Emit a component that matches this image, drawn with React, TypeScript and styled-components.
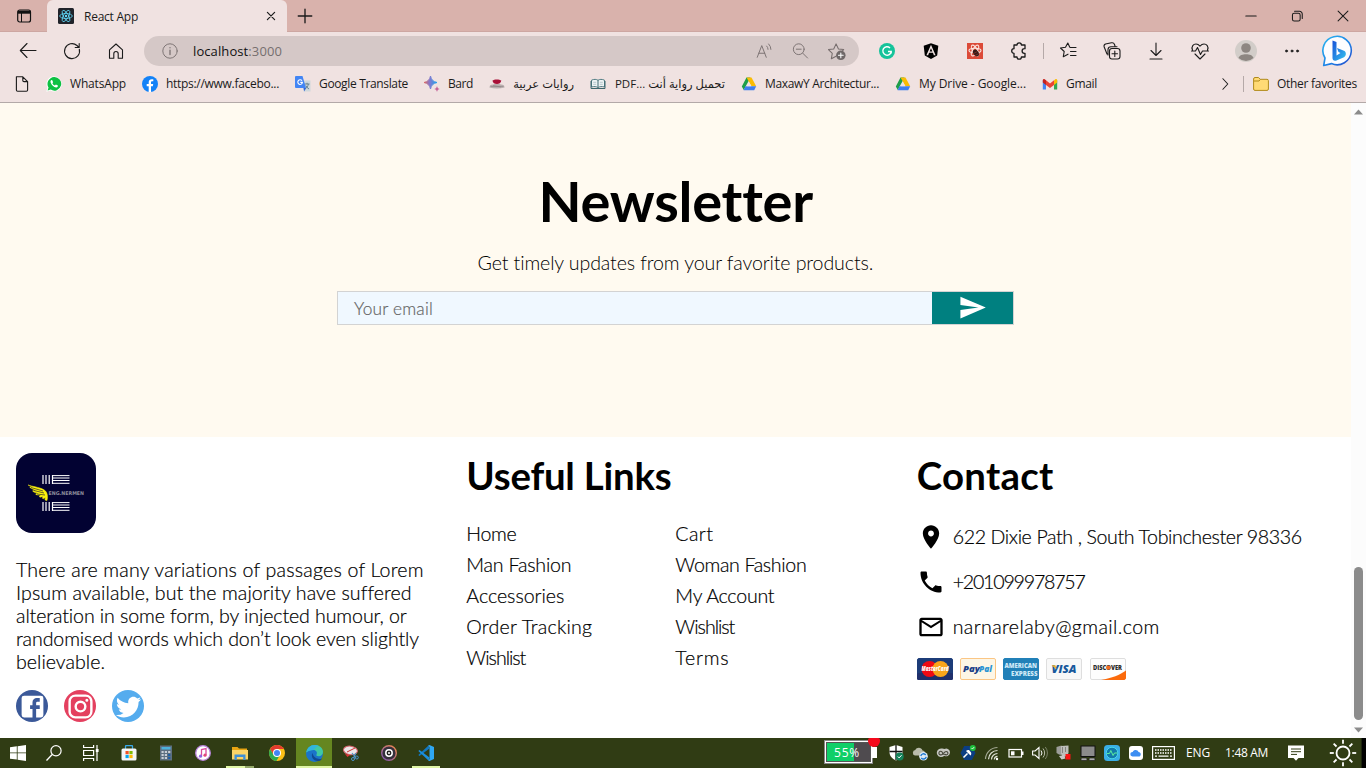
import React, { useLayoutEffect, useRef, useState } from "react";
import styled, { createGlobalStyle } from "styled-components";
import { FaAngular } from "react-icons/fa";

const GlobalStyle = createGlobalStyle`
  * { box-sizing: border-box; }
  body { margin: 0; overflow: hidden; font-family: Lato, "Liberation Sans", sans-serif; }
  svg { display: block; flex: none; }
`;

const uiFont = `"Open Sans", "Noto Sans", sans-serif`;

/* ---------- text set to a given measure ---------- */

const Measure = styled.span<{ $width: number }>`
  display: block;
  flex: none;
  width: ${(p) => p.$width}px;
  white-space: nowrap;
`;

function Fit({ width, children }: { width: number; children: React.ReactNode }) {
  const ref = useRef<HTMLSpanElement>(null);
  const [spacing, setSpacing] = useState(0);
  useLayoutEffect(() => {
    const el = ref.current;
    if (!el) return;
    const length = (el.textContent || "").length;
    setSpacing((width - el.getBoundingClientRect().width) / length);
  }, [width]);
  return (
    <Measure $width={width}>
      <span ref={ref} style={{ letterSpacing: spacing }}>
        {children}
      </span>
    </Measure>
  );
}

/* ---------- browser frame ---------- */

const Screen = styled.div`
  width: 1366px;
  height: 768px;
  display: flex;
  flex-direction: column;
  overflow: hidden;
  background: #fff;
`;

const TabStrip = styled.div`
  height: 32px;
  flex: none;
  display: flex;
  align-items: center;
  background: #d9b2ac;
  box-shadow: inset 0 -1px 0 #cda7a2;
  font: 12px ${uiFont};
`;

const Cell = styled.div<{ $w: number }>`
  width: ${(p) => p.$w}px;
  height: 100%;
  flex: none;
  display: flex;
  align-items: center;
  justify-content: center;
`;

const Tab = styled.div`
  width: 240px;
  height: 32px;
  display: flex;
  align-items: center;
  padding: 0 10px 0 11px;
  background: #f0e2e1;
  border-radius: 6px 6px 0 0;
  color: #1b1b1b;
`;

const TabTitle = styled.div`
  margin-left: 10px;
  flex: 1;
`;

const Spacer = styled.div`
  flex: 1;
`;

const Toolbar = styled.div`
  height: 38px;
  flex: none;
  display: flex;
  align-items: center;
  background: #f0e2e1;
  padding-left: 6px;
  color: #1b1b1b;
`;

const AddressBar = styled.div`
  width: 715px;
  height: 30px;
  margin: 0 6px;
  border-radius: 15px;
  background: #d5c8c7;
  display: flex;
  align-items: center;
  padding: 0 4px 0 17px;
  font: 13px ${uiFont};
  color: #111;
`;

const Url = styled.div`
  margin-left: 14px;
  flex: 1;
`;

const Port = styled.span`
  color: #766f6f;
`;

const Separator = styled.div<{ $left: number; $right: number }>`
  width: 1px;
  height: 16px;
  flex: none;
  background: #b5a9a8;
  margin: 0 ${(p) => p.$right}px 0 ${(p) => p.$left}px;
`;

const FavoritesBar = styled.div`
  height: 33px;
  flex: none;
  display: flex;
  align-items: center;
  gap: 16px;
  padding: 0 9px 5px 14px;
  background: #f0e2e1;
  border-bottom: 1px solid #b3a9a8;
  font: 12px/16px ${uiFont};
  color: #1b1b1b;
`;

const Favorite = styled.div`
  display: flex;
  align-items: center;
  gap: 8px;
  flex: none;
`;

const ArabicLabel = styled.span<{ $w: number; $size: number }>`
  width: ${(p) => p.$w}px;
  white-space: nowrap;
  direction: rtl;
  font: ${(p) => p.$size}px/16px "Open Sans", "DejaVu Sans", sans-serif;
`;

/* ---------- page ---------- */

const Viewport = styled.div`
  height: 635px;
  flex: none;
  display: flex;
`;

const Page = styled.main`
  width: 1351px;
  display: flex;
  flex-direction: column;
  color: #000;
`;

const Newsletter = styled.section`
  height: 334px;
  background: #fffaf0;
  display: flex;
  flex-direction: column;
  align-items: center;
  padding-top: 64px;
`;

const Title = styled.h1`
  margin: 0;
  padding-right: 2px;
  font-size: 56px;
  line-height: 68px;
  font-weight: 700;
`;

const Subtitle = styled.p`
  margin: 11px 0 0;
  font-size: 19.6px;
  line-height: 34px;
  font-weight: 300;
`;

const EmailForm = styled.div`
  margin-top: 11px;
  width: 677px;
  height: 34px;
  border: 1px solid lightgray;
  display: flex;
`;

const EmailField = styled.div`
  flex: 1;
  display: flex;
  align-items: center;
  padding-left: 16px;
  background: aliceblue;
  color: #666;
  font-size: 17.3px;
  font-weight: 300;
  -webkit-text-stroke: 0.2px currentColor;
`;

const SendButton = styled.button`
  width: 81px;
  border: 0;
  padding: 0 0 2px;
  background: teal;
  color: #fff;
  display: flex;
  align-items: center;
  justify-content: center;
`;

const Footer = styled.footer`
  flex: 1;
  display: grid;
  grid-template-columns: repeat(3, 1fr);
  background: #fff;
  font-size: 19.6px;
  font-weight: 300;
  -webkit-text-stroke: 0.2px currentColor;
`;

const Column = styled.div`
  padding: 16px;
`;

const About = styled.div`
  margin: 25px 0 0;
  line-height: 23px;
`;

const Socials = styled.div`
  display: flex;
  gap: 16px;
  margin-top: 17px;
`;

const Social = styled.div<{ $color: string }>`
  width: 32px;
  height: 32px;
  border-radius: 50%;
  background: ${(p) => p.$color};
  color: #fff;
  display: flex;
  align-items: center;
  justify-content: center;
`;

const Heading = styled.h2`
  margin: 0;
  font-size: 38.4px;
  line-height: 44px;
  font-weight: 700;
  -webkit-text-stroke: 0;
`;

const Links = styled.div`
  margin-top: 21px;
  display: grid;
  grid-template-columns: 209px 209px;
  grid-auto-rows: 31px;
  line-height: 31px;
`;

const ContactList = styled.div`
  margin-top: 17px;
`;

const ContactRow = styled.div`
  height: 45px;
  display: flex;
  align-items: center;
  gap: 8px;
`;

const Cards = styled.div`
  margin-top: 9px;
  display: flex;
  gap: 7.25px;
`;

const Scrollbar = styled.div`
  width: 15px;
  background: #fcfcfc;
  display: flex;
  flex-direction: column;
  align-items: center;
  padding: 6px 0 5px;
`;

const Thumb = styled.div`
  width: 9px;
  height: 153px;
  margin: auto 0 7px;
  border-radius: 5px;
  background: #8b8b8b;
`;

/* ---------- taskbar ---------- */

const Taskbar = styled.div`
  height: 30px;
  flex: none;
  display: flex;
  background: #303c14;
  font: 12px ${uiFont};
  color: #fff;
`;

const Task = styled.div<{ $w: number; $active?: boolean }>`
  position: relative;
  width: ${(p) => p.$w}px;
  display: flex;
  align-items: center;
  justify-content: center;
  background: ${(p) => (p.$active ? "#658620" : "none")};
`;

const Running = styled.div<{ $w: number; $split?: boolean }>`
  position: absolute;
  bottom: 0;
  width: ${(p) => p.$w}px;
  height: 2px;
  background: ${(p) => (p.$split ? "linear-gradient(90deg,#e0f6a6 19px,#93a869 19px)" : "#e0f6a6")};
`;

const BatteryMeter = styled.div`
  position: relative;
  width: 49px;
  height: 24px;
  margin: 2px 11px 0 0;
  border: 2px solid #fff;
  outline: 1px solid #888;
  outline-offset: -1px;
  padding: 1px;
  display: flex;
  background: #555;
`;

const BatteryLevel = styled.div`
  flex: 1;
  display: flex;
  align-items: center;
  padding-left: 7px;
  font-size: 12px;
  background: linear-gradient(90deg, #10cf68 27px, #4f4b4f 27px);
`;

const BatteryTip = styled.div`
  position: absolute;
  right: -6px;
  top: 5px;
  width: 5px;
  height: 11px;
  background: #fff;
`;

const AlertDot = styled.div`
  position: absolute;
  right: -9px;
  top: -4px;
  width: 12px;
  height: 9px;
  border-radius: 2px 2px 6px 6px;
  background: #f40a1c;
`;

const TrayText = styled.div<{ $left: number }>`
  margin-left: ${(p) => p.$left}px;
  line-height: 29px;
`;

const ScreenEdge = styled.div`
  width: 5px;
  border-left: 1px solid #1c230c;
  background: #000;
`;

/* ---------- drawings ---------- */

type LineProps = { s?: number; w?: number; c?: string; children: React.ReactNode };
const Line = ({ s = 20, w = 1.1, c = "#1b1b1b", children }: LineProps) => (
  <svg width={s} height={s} viewBox="0 0 20 20" fill="none" stroke={c} strokeWidth={w} strokeLinecap="round" strokeLinejoin="round">
    {children}
  </svg>
);

const Glyph = ({ d, s = 28 }: { d: string; s?: number }) => (
  <svg width={s} height={s} viewBox="0 0 24 24" fill="currentColor">
    <path d={d} />
  </svg>
);

const paths = {
  send: "M2.01 21L23 12 2.01 3 2 10l15 2-15 2z",
  room: "M12 2C8.13 2 5 5.13 5 9c0 5.25 7 13 7 13s7-7.75 7-13c0-3.87-3.13-7-7-7zm0 9.5c-1.38 0-2.5-1.12-2.5-2.5s1.12-2.5 2.5-2.5 2.5 1.12 2.5 2.5-1.12 2.5-2.5 2.5z",
  phone: "M6.62 10.79c1.44 2.83 3.76 5.14 6.59 6.59l2.2-2.2c.27-.27.67-.36 1.02-.24 1.12.37 2.33.57 3.57.57.55 0 1 .45 1 1V20c0 .55-.45 1-1 1-9.39 0-17-7.61-17-17 0-.55.45-1 1-1h3.5c.55 0 1 .45 1 1 0 1.25.2 2.45.57 3.57.11.35.03.74-.25 1.02l-2.2 2.2z",
  mail: "M20 4H4c-1.1 0-1.99.9-1.99 2L2 18c0 1.1.9 2 2 2h16c1.1 0 2-.9 2-2V6c0-1.1-.9-2-2-2zm0 14H4V8l8 5 8-5v10zm-8-7L4 6h16l-8 5z",
  facebook: "M5 3h14a2 2 0 0 1 2 2v14a2 2 0 0 1-2 2H5a2 2 0 0 1-2-2V5a2 2 0 0 1 2-2m13 2h-2.5A3.5 3.5 0 0 0 12 8.5V11h-2v3h2v7h3v-7h3v-3h-3V9a1 1 0 0 1 1-1h2V5z",
  instagram: "M7.8 2h8.4C19.4 2 22 4.6 22 7.8v8.4a5.8 5.8 0 0 1-5.8 5.8H7.8C4.6 22 2 19.4 2 16.2V7.8A5.8 5.8 0 0 1 7.8 2m-.2 2A3.6 3.6 0 0 0 4 7.6v8.8C4 18.39 5.61 20 7.6 20h8.8a3.6 3.6 0 0 0 3.6-3.6V7.6C20 5.61 18.39 4 16.4 4H7.6m9.65 1.5a1.25 1.25 0 0 1 1.25 1.25A1.25 1.25 0 0 1 17.25 8 1.25 1.25 0 0 1 16 6.75a1.25 1.25 0 0 1 1.25-1.25M12 7a5 5 0 0 1 5 5 5 5 0 0 1-5 5 5 5 0 0 1-5-5 5 5 0 0 1 5-5m0 2a3 3 0 0 0-3 3 3 3 0 0 0 3 3 3 3 0 0 0 3-3 3 3 0 0 0-3-3z",
  twitter: "M22.46 6c-.77.35-1.6.58-2.46.69.88-.53 1.56-1.37 1.88-2.38-.83.5-1.75.85-2.72 1.05C18.37 4.5 17.26 4 16 4c-2.35 0-4.27 1.92-4.27 4.29 0 .34.04.67.11.98C8.28 9.09 5.11 7.38 3 4.79c-.37.63-.58 1.37-.58 2.15 0 1.49.75 2.81 1.91 3.56-.71 0-1.37-.2-1.95-.5v.03c0 2.08 1.48 3.82 3.44 4.21a4.22 4.22 0 0 1-1.93.07 4.28 4.28 0 0 0 4 2.98 8.521 8.521 0 0 1-5.33 1.84c-.34 0-.68-.02-1.02-.06C3.44 20.29 5.7 21 8.12 21 16 21 20.33 14.46 20.33 8.79c0-.19 0-.37-.01-.56.84-.6 1.56-1.36 2.14-2.23z",
};

const Svg16 = ({ s = 16, children }: { s?: number; children: React.ReactNode }) => (
  <svg width={s} height={s} viewBox="0 0 16 16" fill="none">
    {children}
  </svg>
);

const ReactBadge = () => (
  <Svg16>
    <rect width="16" height="16" rx="1.5" fill="#20232a" />
    <g stroke="#61dafb" strokeWidth=".8">
      <ellipse cx="8" cy="8" rx="6.3" ry="2.5" />
      <ellipse cx="8" cy="8" rx="6.3" ry="2.5" transform="rotate(60 8 8)" />
      <ellipse cx="8" cy="8" rx="6.3" ry="2.5" transform="rotate(120 8 8)" />
    </g>
    <circle cx="8" cy="8" r="1.2" fill="#61dafb" />
  </Svg16>
);

const WhatsAppIcon = () => (
  <Svg16>
    <path d="M8 .3a7.600 7.600 0 1 1-3.500 14.300L.3 15.800l1.200-4.100A7.600 7.600 0 0 1 8 .3z" fill="#fff" />
    <path d="M8 1.100a6.800 6.800 0 1 1-3.300 12.500l-3.100 1 .9-3.100A6.800 6.800 0 0 1 8 1.100z" fill="#0dc143" />
    <path d="M5.4 4.100c-1.700 1-.8 3.400 1.100 5.400 1.900 1.900 4.200 2.700 5.300 1.100l.1-1-2-1-1 1c-1.200-.5-2-1.300-2.500-2.400l.7-1-.8-2z" fill="#fff" />
  </Svg16>
);

const FacebookRound = () => (
  <Svg16>
    <circle cx="8" cy="8" r="8" fill="#1382f7" />
    <path d="M6.700 16V10.300H4.700V8h2V6.300C6.700 4.200 7.900 3.200 9.700 3.200l1.600.1v2h-1C9.300 5.300 9 5.800 9 6.500V8h2.200l-.4 2.300H9V16z" fill="#fff" />
  </Svg16>
);

const TranslateIcon = () => (
  <Svg16>
    <path d="M7 4.500h8.500v11H8.500z" fill="#cfd8dc" />
    <path d="M9.500 8h5M12 6.800V8m-2 5c2-1 3-3 3.300-5m-2.500 1.500c.6 1.500 1.700 2.600 3.200 3.500" stroke="#607d8b" strokeWidth=".9" />
    <path d="M0 1a1 1 0 0 1 1-1h6.500l3.500 12H1a1 1 0 0 1-1-1z" fill="#4285f4" />
    <path d="M8.500 12h2.500l-1.800 3.500z" fill="#3367d6" />
    <path d="M7 4.800A2.300 2.300 0 1 0 7.400 6.400H5.300" stroke="#fff" strokeWidth="1.100" />
  </Svg16>
);

const BardIcon = () => (
  <Svg16>
    <defs>
      <linearGradient id="bard" x1="0" x2="1" y1="0.500" y2="0.500">
        <stop offset="0" stopColor="#e2685f" />
        <stop offset=".45" stopColor="#7f7ad0" />
        <stop offset="1" stopColor="#1ba1ee" />
      </linearGradient>
    </defs>
    <path d="M6.500 0C7.300 3.800 9 5.600 13 6.500 9 7.400 7.300 9.200 6.500 13 5.700 9.200 4 7.400 0 6.500 4 5.600 5.700 3.800 6.500 0z" fill="url(#bard)" stroke="url(#bard)" />
    <path d="M13 10c.4 1.900 1.200 2.600 3 3-1.800.4-2.600 1.100-3 3-.4-1.900-1.200-2.600-3-3 1.800-.4 2.600-1.100 3-3z" fill="#c7659a" />
  </Svg16>
);

const RoseBook = () => (
  <Svg16>
    <path d="M1 9.500C4 7.500 12 7.500 15 9.500l.6 2c-5 1.200-10.300 1.200-15.200 0z" fill="#b9aeae" />
    <path d="M1.500 10.500h13M4 9.500l8 1.500" stroke="#8c8383" strokeWidth=".6" />
    <path d="M3.500 4.500C5 3 10.500 3 12.300 4.500 12 7 10 8 8 8 5.500 8 3.700 7 3.500 4.500z" fill="#a80f37" />
  </Svg16>
);

const OpenBook = () => (
  <Svg16>
    <path d="M1.500 4.200C4 3 6.500 3.200 8 4.300 9.500 3.200 12 3 14.500 4.200V11C12 10.200 9.500 10.500 8 11.600 6.500 10.500 4 10.200 1.500 11z" fill="#eef4f5" stroke="#4f7b82" />
    <path d="M8 4.300v7M1 5v7.500H15V5" stroke="#3d676e" />
    <path d="M3.200 6.300h3M3.200 8.300h3M9.800 6.300h3M9.800 8.300h3" stroke="#9fb6ba" strokeWidth=".7" />
  </Svg16>
);

const DriveIcon = () => (
  <Svg16>
    <path d="M5.500 1.500h4L4.200 11.300 2.800 14 .8 10.600z" fill="#1e9e4a" />
    <path d="M5.500 1.500h5l4.700 8.800h-4.700z" fill="#fbbc04" />
    <path d="M4.400 10.300h10.800l-2 3.900H2.600z" fill="#3f7ff0" />
    <path d="M8 6l2.300 4.300H5.700z" fill="#f0e2e1" />
  </Svg16>
);

const GmailIcon = () => (
  <Svg16>
    <path d="M.8 4.200v9.300H4V6.500z" fill="#4285f4" />
    <path d="M15.200 4.200v9.300H12V6.500z" fill="#34a853" />
    <path d="M12 4.500l1.300-1.200c1-.6 1.900 0 1.900 1.200v2L12 9z" fill="#fbbc04" />
    <path d="M4 4.300l4 3.200 4-3.200V9l-4 3-4-3z" fill="#ea4335" />
    <path d="M4 4.300L2.700 3.300C1.700 2.700.8 3.300.8 4.500v2L4 9z" fill="#c5221f" />
  </Svg16>
);

const FolderIcon = () => (
  <Svg16>
    <path d="M.600 3A1.500 1.500 0 0 1 2 1.500h3.500l1.700 1.800H14A1.400 1.400 0 0 1 15.400 4.700v8.300A1.400 1.400 0 0 1 14 14.400H2A1.400 1.400 0 0 1 .600 13z" fill="#ffda75" stroke="#b08a1b" />
    <path d="M1 5h5l1.300-1.500" stroke="#b08a1b" />
  </Svg16>
);

const BingIcon = () => (
  <svg width="32" height="32" viewBox="0 0 32 32" fill="none">
    <defs>
      <linearGradient id="bing" x1="0" y1="0" x2="1" y2="1">
        <stop offset="0" stopColor="#2bb7f0" />
        <stop offset=".6" stopColor="#1e7fe5" />
        <stop offset="1" stopColor="#2745c7" />
      </linearGradient>
      <linearGradient id="bingB" x1="0" y1="0" x2="1" y2="1">
        <stop offset="0" stopColor="#1550d8" />
        <stop offset="1" stopColor="#37c3ef" />
      </linearGradient>
    </defs>
    <path d="M1.700 30.500L3 23A14.200 14.200 0 1 1 9.500 28.600z" fill="#fdfdff" stroke="url(#bing)" strokeWidth="1.600" strokeLinejoin="round" />
    <path d="M10.500 5.500l4 1.500v13.500l4-2.500-2-1-1.500-4 7 2.700c2.500 1.200 2.500 5 0 6.500L14.500 25.500c-2.500 1-4-.5-4-2.500z" fill="url(#bingB)" />
  </svg>
);

const Logo = () => (
  <svg width="80" height="80" viewBox="0 0 80 80" fill="none">
    <rect width="80" height="80" rx="16" fill="#020232" />
    {[22, 49].map((y) => (
      <g key={y} stroke="#fff">
        <path d={`M27 ${y}v9M30 ${y}v9M33.200 ${y}v9M36.500 ${y}v9`} strokeWidth="1.200" />
        <path d={`M36 ${y + 0.6}h17.500M36 ${y + 3}h17.500M36 ${y + 5.5}h17.500M36 ${y + 8.3}h17.500`} strokeWidth="1" />
      </g>
    ))}
    <path d="M12 32c6 2 14 2.500 17.500 6 2 2 2.500 6 1.500 9.500-1 .3-1.500 0-2-.7l.3-2.300-2 1.200-1-.5.8-1.800-3 .8-1-.8 1.500-1.400-4-.1-1-1 2.500-.7-4.500-1.200-1-1.200 3-.2-5-2.500-.8-1.200 3 .2z" fill="#fbf20c" stroke="#fbf20c" strokeWidth=".5" />
    <path d="M15 34.500l12 3.500M18 37.500l10 2.500M21 41l8 1" stroke="#020232" strokeWidth=".6" />
    <text x="32.500" y="42" fontFamily="DejaVu Sans" fontSize="5" fontWeight="700" fill="#8d8d9b" textLength="35.500" lengthAdjust="spacingAndGlyphs">
      ENG.NERMEN
    </text>
  </svg>
);

const CardFrame = ({ fill, stroke, children }: { fill: string; stroke: string; children: React.ReactNode }) => (
  <svg width="36" height="22" viewBox="0 0 36 22">
    <rect x=".5" y=".5" width="35" height="21" rx="1.500" fill={fill} stroke={stroke} />
    {children}
  </svg>
);

type CardTextProps = { x: number; y: number; w: number; size: number; fill: string; italic?: boolean; children: React.ReactNode };
const CardText = ({ x, y, w, size, fill, italic, children }: CardTextProps) => (
  <text x={x} y={y} fontFamily="Open Sans" fontWeight="800" fontSize={size} fontStyle={italic ? "italic" : "normal"} fill={fill} stroke="none" textLength={w} lengthAdjust="spacingAndGlyphs">
    {children}
  </text>
);

const PaymentCards = () => (
  <Cards>
    <CardFrame fill="#1c3c78" stroke="#1c3c78">
      <rect x="0" y="15" width="36" height="7" rx="1.500" fill="#1f2f6b" />
      <circle cx="12.500" cy="11" r="8" fill="#f00a14" />
      <circle cx="23.500" cy="11" r="8" fill="#f9a51a" />
      <CardText x={4.5} y={13.3} w={27} size={6.3} fill="#fff" italic>MasterCard</CardText>
    </CardFrame>
    <CardFrame fill="#fdf6e6" stroke="#fbc684">
      <CardText x={3} y={14} w={17} size={9.2} fill="#1c3f86" italic>Pay</CardText>
      <CardText x={19} y={14} w={13} size={9.2} fill="#2a93d2" italic>Pal</CardText>
    </CardFrame>
    <CardFrame fill="#2180b8" stroke="#2180b8">
      <CardText x={1.5} y={10.3} w={32.5} size={6.4} fill="#cfe9f7">AMERICAN</CardText>
      <CardText x={8} y={17.8} w={26.5} size={6.4} fill="#cfe9f7">EXPRESS</CardText>
    </CardFrame>
    <CardFrame fill="#f8f8f8" stroke="#dedede">
      <CardText x={5.5} y={15} w={25} size={10.5} fill="#17589c" italic>VISA</CardText>
      <path d="M5.500 7.300h4l1 4z" fill="#eeb52c" />
    </CardFrame>
    <CardFrame fill="#fdfdfd" stroke="#dedede">
      <path d="M11 22C22 20 30 17 36 12.500V20.500L34.500 22z" fill="#fb6a0b" />
      <CardText x={3} y={12} w={29} size={6.3} fill="#2b2b2b">DISCOVER</CardText>
      <circle cx="18.500" cy="9.600" r="2.200" fill="#f26b21" />
    </CardFrame>
  </Cards>
);

const Arrow = ({ down }: { down?: boolean }) => (
  <svg width="9" height="6" viewBox="0 0 9 6">
    <path d={down ? "M0 .5h9L4.500 5.500z" : "M0 5.500h9L4.500.5z"} fill="#8b8b8b" />
  </svg>
);

/* ---------- taskbar drawings ---------- */

const EdgeIcon = () => (
  <Svg16 s={17}>
    <circle cx="8" cy="8" r="8" fill="#1b74c9" />
    <path d="M.3 7C1 2.800 4.300 0 8.200 0c4.500 0 7.800 3 7.800 6.500 0 2.500-1.800 4-4 4-2 0-2.700-.9-2-1.900.9-1.500-.3-3.900-3-3.900C4 4.700 1.500 5.500.3 7z" fill="#3fc9a4" />
    <path d="M.3 7C1 2.800 4.300 0 8.200 0c1.500 0 3 .4 4 1C9 1 8 4.700 7 4.700 4 4.700 1.500 5.500.3 7z" fill="#31b5dc" />
    <path d="M6 7.500c-1.500 3 .5 7.500 5 7.500 2 0 3.500-.8 4.200-2.400-3 1.200-7.700.4-9.200-5.100z" fill="#114a92" />
  </Svg16>
);

const ChromeIcon = () => (
  <Svg16>
    <circle cx="8" cy="8" r="8" fill="#fbc116" />
    <path d="M1.100 4A8 8 0 0 1 15 4H8L4.600 10z" fill="#e33b2e" />
    <path d="M1.100 4A8 8 0 0 0 7.400 16l3.700-6.200L8 12 4.600 10z" fill="#2da94f" />
    <circle cx="8" cy="8" r="4" fill="#fff" />
    <circle cx="8" cy="8" r="3" fill="#4285f4" />
  </Svg16>
);

const VsCodeIcon = () => (
  <Svg16>
    <path d="M11.500 3.500L1.500 11 .3 9.900 10.500.500z" fill="#1278c0" />
    <path d="M11.500 12.500L1.500 5 .3 6.100 10.500 15.500z" fill="#1b8fdd" />
    <path d="M11.500 0L16 2v12l-4.500 2-1.500-.7 1.500-1V2l-1.500-1.300z" fill="#2fa8f4" />
  </Svg16>
);

const tasks: { w: number; active?: boolean; run?: number; split?: boolean; icon: React.ReactNode }[] = [
  { w: 36, icon: <Svg16><path d="M0 2.200l6.800-.9v6.200H0zM7.600 1.200L16 0v7.500H7.600zM0 8.300h6.800v6.300L0 13.700zM7.600 8.300H16V16l-8.400-1.200z" fill="#fff" /></Svg16> },
  { w: 36, icon: <Svg16><circle cx="10" cy="5.800" r="5.100" stroke="#fff" strokeWidth="1.200" /><path d="M6.200 9.500L.5 15.500" stroke="#fff" strokeWidth="1.300" /></Svg16> },
  { w: 38, icon: <Svg16><path d="M.6 0v2.500h10V0M.6 5.500h10v5H.6zM.6 16v-2.500h10V16M14 0v16" stroke="#fff" strokeWidth="1.200" /><rect x="12.800" y="4" width="2.800" height="3" fill="#fff" /></Svg16> },
  { w: 37, icon: <Svg16><path d="M4.500 4V1.500a1 1 0 0 1 1-1h5a1 1 0 0 1 1 1V4" stroke="#39a9e8" strokeWidth="1.300" /><rect x=".5" y="3.500" width="15" height="12" rx="1.500" fill="#f4f6f7" /><path d="M4.500 6h3.200v3.200H4.500z" fill="#f35325" /><path d="M8.400 6h3.200v3.200H8.400z" fill="#81bc06" /><path d="M4.500 9.900h3.200v3.200H4.500z" fill="#05a6f0" /><path d="M8.400 9.900h3.200v3.200H8.400z" fill="#ffba08" /></Svg16> },
  { w: 37, icon: <Svg16><rect x="2" y=".5" width="12" height="15" fill="#5d6f80" /><rect x="3.500" y="2" width="9" height="2.500" fill="#4cb2dd" />{[6, 9, 12].map((y) => [3.5, 6.8, 10.1].map((x) => <rect key={x + "-" + y} x={x} y={y} width="2.200" height="2" fill={x > 10 && y > 8 ? "#1d5fa8" : "#c7ced6"} />))}</Svg16> },
  { w: 37, icon: <Svg16><circle cx="8" cy="8" r="7.300" fill="#fff" stroke="#b884dc" strokeWidth="1.300" /><path d="M6.500 11V4.500l4.500-1v6.500" stroke="#d94c9d" strokeWidth="1.300" /><circle cx="5.500" cy="11.200" r="1.600" fill="#8f63e3" /><circle cx="10" cy="10.200" r="1.600" fill="#e1487c" /></Svg16> },
  { w: 37, run: 28, split: true, icon: <Svg16><path d="M0 2h5.500l1.500 1.500H15V7H0z" fill="#e8a413" /><path d="M0 5h16v9.500H0z" fill="#fbd468" /><path d="M2.500 15V9.500h11V15h-2.300v-3H4.800v3z" fill="#3f8fd6" /></Svg16> },
  { w: 38, icon: <ChromeIcon /> },
  { w: 36, active: true, run: 36, icon: <EdgeIcon /> },
  { w: 38, icon: <Svg16><ellipse cx="7.500" cy="5.500" rx="7" ry="4.300" fill="#ece7e9" stroke="#d4626c" transform="rotate(8 8 5)" /><path d="M4 7l8-4" stroke="#c33" /><path d="M9 8l4 5M13 8l-2.500 5" stroke="#4b93c9" strokeWidth="1.200" /><circle cx="10" cy="14" r="1.500" stroke="#4b93c9" /><circle cx="13.800" cy="12.500" r="1.500" stroke="#4b93c9" /><path d="M2 9l2.500 3L7 10z" fill="#d33" /></Svg16> },
  { w: 37, icon: <Svg16><defs><linearGradient id="groove" x1="0" y1="1" x2="1" y2="0"><stop offset="0" stopColor="#7a53b8" /><stop offset="1" stopColor="#f18a4a" /></linearGradient></defs><circle cx="8" cy="8" r="7.300" fill="#35303c" stroke="url(#groove)" strokeWidth="1.400" /><circle cx="8" cy="8" r="3.200" stroke="#fff" strokeWidth="1.500" fill="#222" /><circle cx="8" cy="8" r="1" fill="#fff" /></Svg16> },
  { w: 37, run: 28, icon: <VsCodeIcon /> },
];

const tray: React.ReactNode[] = [
  <Svg16><path d="M8 0l6.500 2v5c0 4-2.500 6.500-6.500 8.500C4 13.500 1.500 11 1.500 7V2z" fill="#fff" /><path d="M8 0v15M1.500 6.500h13" stroke="#111" strokeWidth="1.300" /><circle cx="11.700" cy="11.500" r="4" fill="#15825a" /><path d="M9.800 11.500l1.300 1.400 2.500-2.700" stroke="#fff" /></Svg16>,
  <Svg16><path d="M3 10.500a2.800 2.800 0 0 1 .3-5.500C4.500 2 9.500 1.800 10.500 5.500c3 .3 3.500 4 1.500 5z" fill="#b9bcab" /><circle cx="11.500" cy="11.300" r="4.300" fill="#dce9f5" /><path d="M8.800 11a2.700 2.700 0 0 1 4.900-1M14.200 11.800a2.700 2.700 0 0 1-4.900 1" stroke="#1c78cf" strokeWidth="1.400" /></Svg16>,
  <Svg16><path d="M5.300 3.500a4.300 4.300 0 1 0 3 7.200 3.800 3.800 0 1 0 .200-6.700 4.500 4.500 0 0 0-3.200-.5z" fill="#c6c8c2" /><path d="M8 9.700L6.500 8.300A1.800 1.800 0 1 0 5.500 9.700c1.500 0 2.500-3.200 4.700-3.200a1.700 1.700 0 1 1 0 3.400c-.8 0-1.300-.4-1.800-.9" stroke="#46483b" strokeWidth="1.100" /></Svg16>,
  <Svg16><path d="M4.200 1h7.600L15.500 8l-3.700 7H4.200L.5 8z" fill="#0b3d82" /><path d="M3.500 12.500l4-4" stroke="#fff" strokeWidth="1.600" /><path d="M6 6l4.500 4.500c1-1 1-2.500.2-3.500L9.500 5.500C8.500 4.800 7 5 6 6z" fill="#fff" /><circle cx="12.800" cy="3" r="3" fill="#20c13c" /><path d="M11.500 3l1 1 1.700-2" stroke="#fff" strokeWidth=".8" /></Svg16>,
  <Svg16><g stroke="#dfe2d6" strokeWidth="1.200"><path d="M1.500 14A12 12 0 0 1 13.500 2.500" opacity=".65" /><path d="M4.500 14.200a9 9 0 0 1 9-8.700M7.500 14.400a6 6 0 0 1 6-5.900M10.300 14.500a3.300 3.300 0 0 1 3.200-3.200" /></g><circle cx="13" cy="14" r="1.200" fill="#fff" /></Svg16>,
  <Svg16><rect x="1" y="4.500" width="12.500" height="7.500" stroke="#fff" strokeWidth="1.200" /><rect x="3" y="6.300" width="3.500" height="4" fill="#fff" /><rect x="14" y="6.500" width="1.500" height="3.500" fill="#fff" /></Svg16>,
  <Svg16><path d="M.6 6h2.500L7 2.500v11L3.100 10H.6z" stroke="#fff" strokeWidth="1.100" /><path d="M9 5.500a4 4 0 0 1 0 5" stroke="#fff" /><path d="M11 3.500a7 7 0 0 1 0 9" stroke="#b9bea9" /><path d="M13.300 2a9.500 9.500 0 0 1 0 12" stroke="#7c8368" /></Svg16>,
  <Svg16><path d="M.5 2l5-1.500V10L3 9.500.5 8z" fill="#9c9d99" /><path d="M5 1l7.500-.5V8c-1 3-4 4-5.500 4L5 9z" fill="#bdbebb" /><path d="M3 11l5-1 1.500 3.500-4 1z" fill="#c9c9c9" /><path d="M6.500 2v6M9.500 2v5" stroke="#83847f" /><rect x="9.500" y="9" width="5" height="5.500" fill="#fa1414" /></Svg16>,
  <Svg16><rect x="1" y="1" width="14" height="10.500" fill="#8b8b8b" stroke="#111" /><rect x="1" y="13" width="6" height="2.500" rx="1" fill="#aaa" stroke="#111" strokeWidth=".6" /><rect x="9" y="13" width="6" height="2.500" rx="1" fill="#aaa" stroke="#111" strokeWidth=".6" /></Svg16>,
  <Svg16><rect width="16" height="16" rx="3.500" fill="#3aaee6" /><circle cx="8" cy="8" r="5.800" fill="#127aa9" stroke="#47d6e8" /><path d="M3 8.500h2.500l1.300-3 2.300 5 1.400-2.500H13" stroke="#5df0a0" /></Svg16>,
  <Svg16><rect x="1" y="1" width="14" height="14" rx="3" fill="#fff" /><path d="M4.500 11.500a2.300 2.300 0 0 1 .2-4.600C6 4 10 4.500 10.500 7c2.800 0 3 4 .8 4.500z" fill="#3d8ef2" /></Svg16>,
];

const links: [string, number, string, number][] = [
  ["Home", 50, "Cart", 38],
  ["Man Fashion", 105, "Woman Fashion", 131],
  ["Accessories", 98, "My Account", 99],
  ["Order Tracking", 126, "Wishlist", 59],
  ["Wishlist", 59, "Terms", 54],
];

const Minus = () => <Line s={16} w={1.3}><path d="M3.500 10h13" /></Line>;

export default function App() {
  return (
    <Screen>
      <GlobalStyle />
      <TabStrip>
        <Cell $w={47}>
          <Svg16><rect x="1.700" y="2" width="12.800" height="12" rx="2" stroke="#111" strokeWidth="1.200" /><path d="M2 2.700h12.500v3H2z" fill="#111" /><path d="M5.500 5v9" stroke="#111" /></Svg16>
        </Cell>
        <Tab>
          <ReactBadge />
          <TabTitle><Fit width={54}>React App</Fit></TabTitle>
          <Line s={12} w={2}><path d="M4 4l12 12M16 4L4 16" /></Line>
        </Tab>
        <Cell $w={36}><Line s={18} w={1.5}><path d="M10 2.500v15M2.500 10h15" /></Line></Cell>
        <Spacer />
        <Cell $w={46}><Minus /></Cell>
        <Cell $w={46}>
          <Line s={14} w={1.5}><rect x="3.500" y="6" width="11" height="11" rx="2.500" /><path d="M6.500 3.200h7a4 4 0 0 1 4 4v6.500" /></Line>
        </Cell>
        <Cell $w={46}><Line s={14} w={1.5}><path d="M3 3l14 14M17 3L3 17" /></Line></Cell>
      </TabStrip>

      <Toolbar>
        <Cell $w={44}><Line><path d="M18 9.500H2.500M9 2.500L2.300 9.500 9 16.500" /></Line></Cell>
        <Cell $w={44}><Line><path d="M17.300 8.200A7.500 7.500 0 1 1 15 4.500l2 2M17.200 2.500v4h-4" /></Line></Cell>
        <Cell $w={44}><Line><path d="M3.500 8.800L10 3l6.500 5.800v8.400h-4.300v-4.500a2.200 2.200 0 0 0-4.400 0v4.500H3.500z" /></Line></Cell>
        <AddressBar>
          <Line s={18} c="#7d7474"><circle cx="10" cy="10" r="8" /><path d="M10 9v5M10 6.200v.3" strokeWidth="1.500" /></Line>
          <Url><Fit width={89}>localhost<Port>:3000</Port></Fit></Url>
          <Cell $w={36}>
            <Line s={18} c="#7d7474"><path d="M2.500 17L7.500 4l5 13M4.200 12.500h6.600M13 4.500a5 5 0 0 1 1.500 3.700M15.200 2.200a8.500 8.500 0 0 1 2.500 6" /></Line>
          </Cell>
          <Cell $w={37}><Line s={18} c="#7d7474"><circle cx="7.500" cy="8" r="6" /><path d="M12 12.500L17.300 17.800M4.800 8h5.400" /></Line></Cell>
          <Cell $w={36}>
            <Line s={19} c="#766d6d"><path d="M8.500 15l-5 2.700 1-5.700-4-4 5.500-.7L8.500 2 11 7.300l5.500.7-1.500 1.500" /><circle cx="13.500" cy="14" r="5" fill="#6f6868" stroke="none" /><path d="M13.500 11.500v5M11 14h5" stroke="#fff" /></Line>
          </Cell>
        </AddressBar>
        <Cell $w={44}>
          <Svg16><circle cx="8" cy="8" r="8" fill="#15c39a" /><path d="M11 5A4.200 4.200 0 1 0 12.200 8.500H9M12.200 8.500v2" stroke="#fff" strokeWidth="1.400" /></Svg16>
        </Cell>
        <Cell $w={44}><FaAngular size={18} color="#000" /></Cell>
        <Cell $w={44}>
          <Svg16><rect width="16" height="16" fill="#dc4a38" /><g stroke="#fbe4df" strokeWidth="1.100"><ellipse cx="8" cy="7.500" rx="6" ry="2.300" /><ellipse cx="8" cy="7.500" rx="6" ry="2.300" transform="rotate(60 8 7.500)" /><ellipse cx="8" cy="7.500" rx="6" ry="2.300" transform="rotate(120 8 7.500)" /></g><ellipse cx="9" cy="10" rx="2.600" ry="3.800" transform="rotate(-35 9 10)" fill="#351a17" /><path d="M6.500 10.500l4-2M8 12.500l4-2" stroke="#a33a2c" strokeWidth=".6" /></Svg16>
        </Cell>
        <Cell $w={44}>
          <Line w={1.3}><path d="M5 4h3a2.200 2.200 0 0 1 4.400 0H16v3.700h-.6a2.300 2.300 0 0 0 0 4.600h.6V16h-3.600a2.200 2.200 0 0 1-4.400 0H5v-3.700a2.300 2.300 0 0 1 0-4.600z" /></Line>
        </Cell>
        <Separator $left={2} $right={2} />
        <Cell $w={44}><Line><path d="M10 13.200l-4.700 2.500.9-5.200L2.500 7l5-.7L9.800 2l2 4.300M12.500 6.500H18M12.500 10.500H18M12.500 14.500H18" /></Line></Cell>
        <Cell $w={44}><Line><rect x="7.500" y="7.500" width="10.500" height="10.500" rx="2.500" /><path d="M12.800 10v5.500M10 12.800h5.500M5 13l-2.800-7c-.5-1.500 0-2.500 1.300-3L9.500 1.800c1.500-.3 2.500.2 3 1.700l.5 1.500M6 14V8.500A3 3 0 0 1 9 5.700h6" /></Line></Cell>
        <Cell $w={44}><Line><path d="M10 2v12M5 9.500l5 5 5-5M4 18h12" /></Line></Cell>
        <Cell $w={44}><Line><path d="M2.500 9C1 5.500 3.500 3 6 3c2 0 3 1 4 2.200C11 4 12 3 14 3c2.500 0 5 2.500 3.500 6M1.500 10h4l2-3.500 3 7 2-3.500h6M5 13l5 5 5-5" /></Line></Cell>
        <Cell $w={48}>
          <svg width="22" height="22" viewBox="0 0 22 22"><circle cx="11" cy="11" r="11" fill="#d2cdc9" /><circle cx="11" cy="8" r="4.800" fill="#8d8681" /><path d="M3.500 18c1-3 4-3.800 7.500-3.800s6.500.8 7.500 3.800a11 11 0 0 1-15 0z" fill="#8d8681" /></svg>
        </Cell>
        <Cell $w={44}><Line><g fill="#1b1b1b" strokeWidth=".6"><circle cx="4.500" cy="10" r="1.100" /><circle cx="10" cy="10" r="1.100" /><circle cx="15.500" cy="10" r="1.100" /></g></Line></Cell>
        <Cell $w={48}><BingIcon /></Cell>
      </Toolbar>

      <FavoritesBar>
        <Line s={16} w={1.4}><path d="M3 1h8l6 6v10.500a1.500 1.500 0 0 1-1.500 1.500h-11A1.500 1.500 0 0 1 3 17.500zM11 1v4.500A1.500 1.500 0 0 0 12.500 7H17" /></Line>
        <Favorite><WhatsAppIcon /><Fit width={56}>WhatsApp</Fit></Favorite>
        <Favorite><FacebookRound /><Fit width={113}>https://www.facebo...</Fit></Favorite>
        <Favorite><TranslateIcon /><Fit width={89}>Google Translate</Fit></Favorite>
        <Favorite><BardIcon /><Fit width={25}>Bard</Fit></Favorite>
        <Favorite><RoseBook /><ArabicLabel $w={61} $size={11.5}>روايات عربية</ArabicLabel></Favorite>
        <Favorite><OpenBook /><ArabicLabel $w={111} $size={11.5}>تحميل رواية أنت ...PDF</ArabicLabel></Favorite>
        <Favorite><DriveIcon /><Fit width={114}>MaxawY Architectur...</Fit></Favorite>
        <Favorite><DriveIcon /><Fit width={107}>My Drive - Google...</Fit></Favorite>
        <Favorite><GmailIcon /><Fit width={31}>Gmail</Fit></Favorite>
        <Spacer />
        <Line s={14} w={1.5}><path d="M7 2.500l7 7.500-7 7.500" /></Line>
        <Separator $left={-5} $right={-7} />
        <Favorite><FolderIcon /><Fit width={80}>Other favorites</Fit></Favorite>
      </FavoritesBar>

      <Viewport>
        <Page>
          <Newsletter>
            <Title><Fit width={272}>Newsletter</Fit></Title>
            <Subtitle><Fit width={396}>Get timely updates from your favorite products.</Fit></Subtitle>
            <EmailForm>
              <EmailField><Fit width={79}>Your email</Fit></EmailField>
              <SendButton><Glyph d={paths.send} s={29} /></SendButton>
            </EmailForm>
          </Newsletter>
          <Footer>
            <Column>
              <Logo />
              <About>
                <Fit width={408}>There are many variations of passages of Lorem</Fit>
                <Fit width={395}>Ipsum available, but the majority have suffered</Fit>
                <Fit width={391}>alteration in some form, by injected humour, or</Fit>
                <Fit width={403}>randomised words which don’t look even slightly</Fit>
                <Fit width={89}>believable.</Fit>
              </About>
              <Socials>
                <Social $color="#3b5999"><Glyph d={paths.facebook} s={29} /></Social>
                <Social $color="#e4405f"><Glyph d={paths.instagram} s={29} /></Social>
                <Social $color="#55acee"><Glyph d={paths.twitter} s={29} /></Social>
              </Socials>
            </Column>
            <Column>
              <Heading><Fit width={205}>Useful Links</Fit></Heading>
              <Links>
                {links.map(([a, aw, b, bw], i) => (
                  <React.Fragment key={i}>
                    <Fit width={aw}>{a}</Fit>
                    <Fit width={bw}>{b}</Fit>
                  </React.Fragment>
                ))}
              </Links>
            </Column>
            <Column>
              <Heading><Fit width={137}>Contact</Fit></Heading>
              <ContactList>
                <ContactRow><Glyph d={paths.room} /><Fit width={349}>622 Dixie Path , South Tobinchester 98336</Fit></ContactRow>
                <ContactRow><Glyph d={paths.phone} /><Fit width={132}>+201099978757</Fit></ContactRow>
                <ContactRow><Glyph d={paths.mail} /><Fit width={207}>narnarelaby@gmail.com</Fit></ContactRow>
              </ContactList>
              <PaymentCards />
            </Column>
          </Footer>
        </Page>
        <Scrollbar>
          <Arrow />
          <Thumb />
          <Arrow down />
        </Scrollbar>
      </Viewport>

      <Taskbar>
        {tasks.map((t, i) => (
          <Task key={i} $w={t.w} $active={t.active}>
            {t.icon}
            {t.run && <Running $w={t.run} $split={t.split} />}
          </Task>
        ))}
        <Spacer />
        <BatteryMeter>
          <BatteryLevel><Fit width={26}>55%</Fit></BatteryLevel>
          <BatteryTip />
          <AlertDot />
        </BatteryMeter>
        {tray.map((icon, i) => (
          <Cell key={i} $w={24}>{icon}</Cell>
        ))}
        <Cell $w={30}>
          <svg width="23" height="14" viewBox="0 0 23 14" fill="none" stroke="#fff"><rect x=".6" y=".6" width="21.800" height="12.800" strokeWidth="1.200" /><path d="M3 4h17M3 7h17" strokeDasharray="1.500 1" strokeWidth="1.300" /><path d="M3 10.200h2M6.500 10.200h10M18 10.200h2" strokeWidth="1.300" /></svg>
        </Cell>
        <TrayText $left={8}><Fit width={24}>ENG</Fit></TrayText>
        <TrayText $left={15}><Fit width={43}>1:48 AM</Fit></TrayText>
        <Cell $w={56}>
          <Svg16><path d="M0 .500h16v12.500h-5.500L8 15.800 5.500 13H0z" fill="#fff" /><path d="M3 4h10M3 6.700h10M3 9.400h6" stroke="#303c14" /></Svg16>
        </Cell>
        <Cell $w={37}>
          <svg width="28" height="28" viewBox="0 0 28 28" fill="none" stroke="#fff" strokeWidth="1.800"><circle cx="14" cy="14" r="6.500" />
            {[0, 45, 90, 135, 180, 225, 270, 315].map((a) => <path key={a} d="M14 .8v4" transform={`rotate(${a} 14 14)`} />)}
          </svg>
        </Cell>
        <ScreenEdge />
      </Taskbar>
    </Screen>
  );
}
